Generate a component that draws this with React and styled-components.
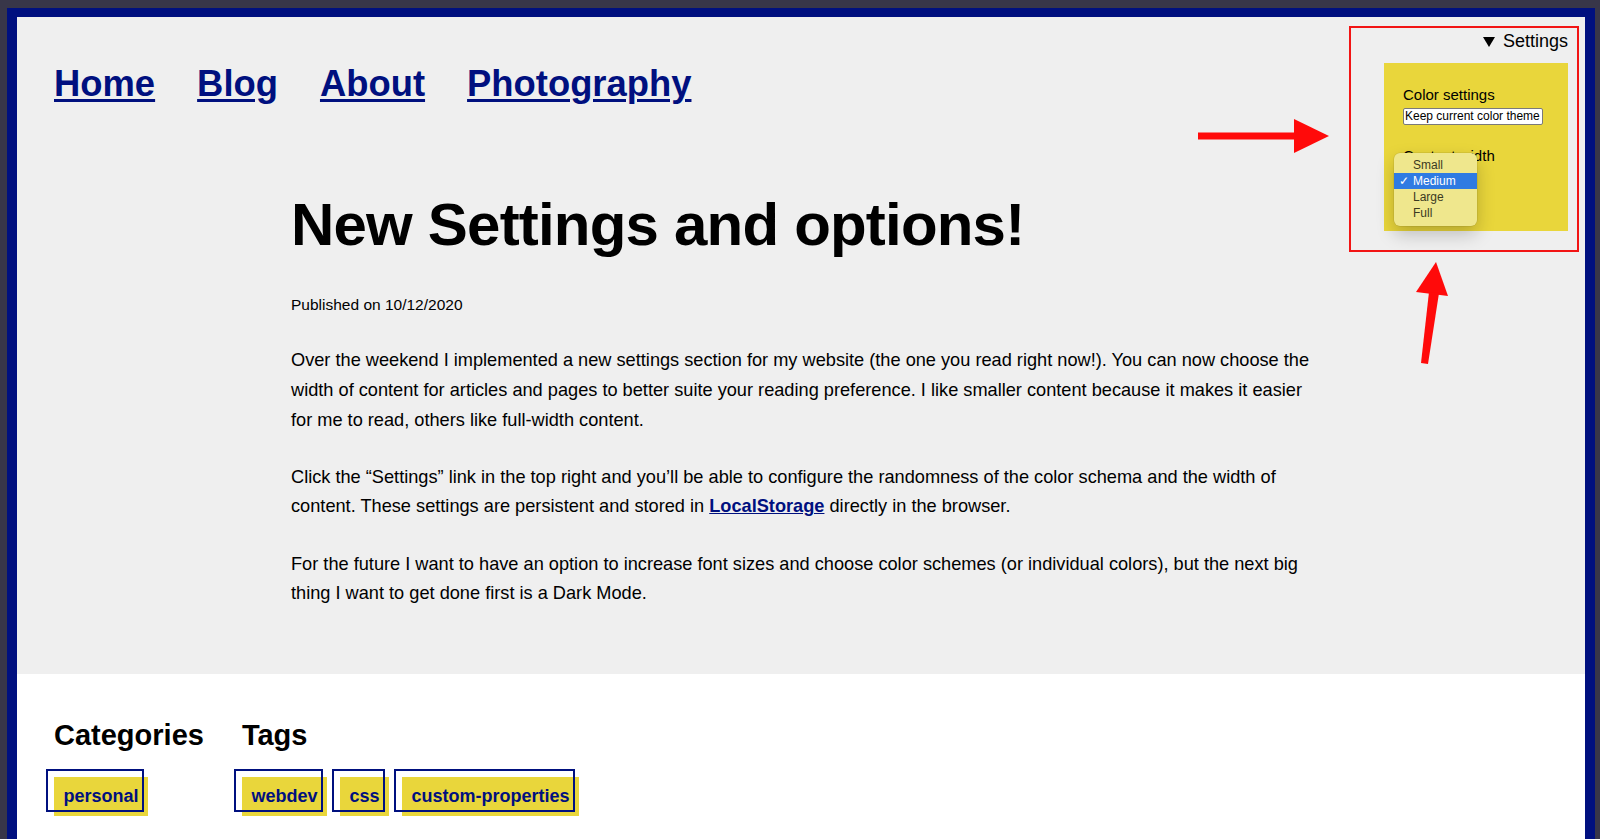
import styled, { createGlobalStyle } from 'styled-components';

const navy = '#00107f';
const yellow = '#e9d63b';

const GlobalStyle = createGlobalStyle`
  html, body {
    margin: 0;
    height: 839px;
    overflow: hidden;
  }
  body {
    background: #383649;
    padding: 8px 5px 0 7px;
    box-sizing: border-box;
    font-family: "Liberation Sans", Arial, Helvetica, sans-serif;
    color: #000;
  }
`;

const Frame = styled.div`
  position: relative;
  border: 10px solid ${navy};
  border-top-width: 9px;
  border-bottom: none;
  background: #fff;
  height: 831px;
  box-sizing: border-box;
`;

const Main = styled.main`
  background: #efefef;
  padding: 46px 37px 65px;
`;

const Nav = styled.nav`
  display: flex;
  gap: 42px;
`;

const NavLink = styled.a`
  font-size: 36.4px;
  font-weight: bold;
  line-height: 41.4px;
  color: ${navy};
  text-decoration: underline;
  text-underline-offset: 3px;
  text-decoration-thickness: 3px;
`;

const Article = styled.article`
  width: 1020px;
  margin: 86px auto 0;
`;

const Title = styled.h1`
  margin: 0;
  font-size: 60px;
  line-height: 69px;
  letter-spacing: -0.8px;
  font-weight: bold;
`;

const Published = styled.p`
  margin: 37px 0 32px;
  font-size: 15.5px;
  line-height: 18px;
`;

const Para = styled.p`
  margin: 0 0 27.6px;
  font-size: 18.2px;
  line-height: 29.6px;

  &:last-child {
    margin-bottom: 0;
  }
`;

const InlineLink = styled.a`
  color: ${navy};
  font-weight: bold;
  text-decoration: underline;
`;

const Footer = styled.footer`
  display: flex;
  gap: 38px;
  padding: 45px 37px 40px;
`;

const Group = styled.section`
  display: flex;
  flex-direction: column;
  gap: 26px;
`;

const GroupTitle = styled.h2`
  margin: 0;
  font-size: 29px;
  line-height: 32px;
  font-weight: bold;
`;

const TagList = styled.div`
  display: flex;
  gap: 13px;
`;

const Tag = styled.a`
  position: relative;
  display: block;
  background: ${yellow};
  color: ${navy};
  font-size: 18px;
  font-weight: bold;
  line-height: 23px;
  padding: 8px 9.5px;
  text-decoration: none;

  &::before {
    content: '';
    position: absolute;
    top: -8px;
    left: -8px;
    width: 100%;
    height: 100%;
    border: 2px solid ${navy};
  }
`;

/* settings popover, shown open and highlighted in red */
const Settings = styled.div`
  position: absolute;
  top: 9px;
  right: 6px;
  width: 230px;
  box-sizing: border-box;
  border: 2px solid #f21414;
  padding: 3px 9px 19px 33px;
`;

const Summary = styled.div`
  display: flex;
  align-items: center;
  justify-content: flex-end;
  gap: 8px;
  font-size: 18px;
  line-height: 21px;
`;

const Marker = styled.span`
  width: 0;
  height: 0;
  border-left: 6px solid transparent;
  border-right: 6px solid transparent;
  border-top: 10px solid #000;
`;

const Panel = styled.div`
  position: relative;
  margin-top: 11px;
  height: 168px;
  box-sizing: border-box;
  background: ${yellow};
  padding: 23px 19px 0;
`;

const Label = styled.div`
  font-size: 15px;
  line-height: 18px;
  margin-top: ${(p) => p.$top || 0}px;
`;

const Select = styled.div`
  margin-top: 4px;
  width: ${(p) => p.$width}px;
  height: 17px;
  box-sizing: border-box;
  background: #fff;
  border: 1px solid #7a7a7a;
  border-radius: 2px;
  font-size: 12px;
  line-height: 15px;
  padding-left: 1px;
  white-space: nowrap;
  overflow: hidden;
`;

const Menu = styled.ul`
  position: absolute;
  left: 10px;
  top: 90px;
  width: 83px;
  margin: 0;
  padding: 4px 0 5px;
  list-style: none;
  background: #efe78d;
  border-radius: 6px;
  box-shadow: 0 0 0 0.5px rgba(0, 0, 0, 0.12), 0 8px 18px rgba(0, 0, 0, 0.22);
`;

const MenuItem = styled.li`
  position: relative;
  height: 16px;
  padding-left: 19px;
  font-size: 12px;
  line-height: 16px;
  color: ${(p) => (p.$active ? '#fff' : '#3b3a22')};
  background: ${(p) => (p.$active ? '#2f7be2' : 'transparent')};
`;

const Check = styled.span`
  position: absolute;
  left: 5px;
  top: 0;
`;

const ArrowSvg = styled.svg`
  position: absolute;
  left: ${(p) => p.$x}px;
  top: ${(p) => p.$y}px;
  pointer-events: none;
`;

const widths = ['Small', 'Medium', 'Large', 'Full'];

export default function App() {
  return (
    <>
      <GlobalStyle />
      <Frame>
        <Main>
          <Nav>
            <NavLink href="#">Home</NavLink>
            <NavLink href="#">Blog</NavLink>
            <NavLink href="#">About</NavLink>
            <NavLink href="#">Photography</NavLink>
          </Nav>
          <Article>
            <Title>New Settings and options!</Title>
            <Published>Published on 10/12/2020</Published>
            <Para>
              Over the weekend I implemented a new settings section for my website (the one you read right now!). You can now choose the width of content for articles and pages to better suite your reading preference. I like smaller content because it makes it easier for me to read, others like full-width content.
            </Para>
            <Para>
              Click the “Settings” link in the top right and you’ll be able to configure the randomness of the color schema and the width of content. These settings are persistent and stored in <InlineLink href="#">LocalStorage</InlineLink> directly in the browser.
            </Para>
            <Para>
              For the future I want to have an option to increase font sizes and choose color schemes (or individual colors), but the next big thing I want to get done first is a Dark Mode.
            </Para>
          </Article>
        </Main>
        <Footer>
          <Group>
            <GroupTitle>Categories</GroupTitle>
            <TagList>
              <Tag href="#">personal</Tag>
            </TagList>
          </Group>
          <Group>
            <GroupTitle>Tags</GroupTitle>
            <TagList>
              <Tag href="#">webdev</Tag>
              <Tag href="#">css</Tag>
              <Tag href="#">custom-properties</Tag>
            </TagList>
          </Group>
        </Footer>

        <Settings>
          <Summary>
            <Marker />
            Settings
          </Summary>
          <Panel>
            <Label>Color settings</Label>
            <Select $width={140}>Keep current color theme</Select>
            <Label $top={22}>Content width</Label>
            <Select $width={66}>Medium</Select>
            <Menu>
              {widths.map((w) => (
                <MenuItem key={w} $active={w === 'Medium'}>
                  {w === 'Medium' && <Check>✓</Check>}
                  {w}
                </MenuItem>
              ))}
            </Menu>
          </Panel>
        </Settings>

        <ArrowSvg $x={1181} $y={102} width="132" height="36" viewBox="0 0 132 36">
          <rect x="0" y="13.5" width="99" height="7" fill="#ff0a0a" />
          <polygon points="96,0 131,17 96,34" fill="#ff0a0a" />
        </ArrowSvg>
        <ArrowSvg $x={1395} $y={241} width="40" height="108" viewBox="0 0 40 108">
          <polygon points="24,4 4,34 36,38" fill="#ff0a0a" />
          <polygon points="17,34 27,35 16,106 9,105" fill="#ff0a0a" />
        </ArrowSvg>
      </Frame>
    </>
  );
}
